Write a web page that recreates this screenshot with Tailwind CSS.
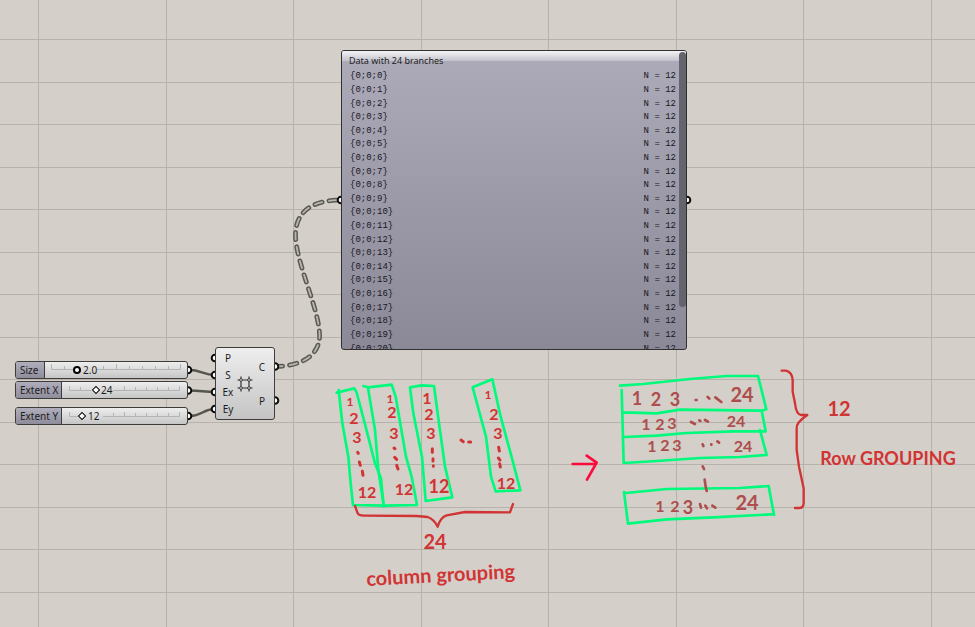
<!DOCTYPE html>
<html lang="en">
<head>
<meta charset="utf-8">
<title>Grid data tree</title>
<script src="https://cdn.jsdelivr.net/npm/@tailwindcss/browser@4"></script>
</head>
<body class="bg-[#d4cfc8]">
<main class="relative min-h-screen w-full overflow-hidden bg-[#d4cfc8] font-['Noto_Sans',sans-serif] text-[#1c1c1c]">

  <!-- canvas grid, wires and ports -->
  <svg class="absolute inset-0 h-full w-full" aria-hidden="true">
    <defs>
      <pattern id="grid" width="255" height="85" patternUnits="userSpaceOnUse">
        <path d="M38.5 0V85M166.5 0V85M0 39.5H255M0 82.5H255" stroke="#b7b3ac" fill="none"/>
      </pattern>
    </defs>
    <rect width="100%" height="100%" fill="url(#grid)"/>
    <g fill="none" stroke="#55544f" stroke-width="2.5">
      <path d="M190 370C200 370 204 375 215 375"/>
      <path d="M190 390.500C200 390.500 205 392 215 392"/>
      <path d="M190 416C202 416 203 409 215 409"/>
    </g>
    <g fill="none" stroke-linecap="round" stroke-dasharray="7.500 7">
      <path d="M275 366.500C303 366 318 355 319.500 338C321 312 295 262 295.500 234C296 212 312 200 341 200" stroke="#5a5954" stroke-width="4.800"/>
      <path d="M275 366.500C303 366 318 355 319.500 338C321 312 295 262 295.500 234C296 212 312 200 341 200" stroke="#b9b6ae" stroke-width="1.800"/>
    </g>
    <g fill="#fff" stroke="#0c0c0c" stroke-width="2">
      <circle cx="188" cy="370" r="3.300"/><circle cx="188" cy="390.500" r="3.300"/><circle cx="188" cy="416" r="3.300"/>
      <circle cx="215" cy="358" r="3.300"/><circle cx="215" cy="375" r="3.300"/><circle cx="215" cy="392" r="3.300"/><circle cx="215" cy="409" r="3.300"/>
      <circle cx="275" cy="366.500" r="3.300"/><circle cx="275" cy="400.500" r="3.300"/>
      <circle cx="341" cy="200" r="3.300"/><circle cx="687" cy="200" r="3.300"/>
    </g>
  </svg>

  <!-- number sliders -->
  <div class="absolute left-[15px] top-[361px] flex h-[18px] w-[173px] overflow-hidden rounded-[3px] border border-[#3c3c3c] bg-linear-to-b from-[#eeeeee] to-[#c6c6c6] text-[10px] leading-4">
    <label for="size" class="w-[29px] shrink-0 border-r border-[#3c3c3c] bg-linear-to-b from-[#b0aebd] to-[#8f8d9c] pl-1">Size</label>
    <div class="relative flex-1">
      <svg class="absolute left-[6px] top-[2px] h-2 w-[131px]" fill="none" stroke="#b4b4b4"><path d="M.5 0V5.500H22M46 5.500H129.500V0M13.500 2V5M52.500 2V5M65.500 0V5M78.500 2V5M91.500 2V5M104.500 2V5M117.500 2V5"/></svg>
      <input id="size" type="range" min="0" max="10" step="0.1" value="2" class="absolute left-[3px] top-0 m-0 h-4 w-[134px] appearance-none bg-transparent [&::-webkit-slider-thumb]:h-[8px] [&::-webkit-slider-thumb]:w-[8px] [&::-webkit-slider-thumb]:appearance-none [&::-webkit-slider-thumb]:rounded-full [&::-webkit-slider-thumb]:border-2 [&::-webkit-slider-thumb]:border-black [&::-webkit-slider-thumb]:bg-white">
      <output for="size" class="absolute left-[38px] top-0">2.0</output>
    </div>
  </div>
  <div class="absolute left-[15px] top-[381px] flex h-[18px] w-[173px] overflow-hidden rounded-[3px] border border-[#3c3c3c] bg-linear-to-b from-[#eeeeee] to-[#c6c6c6] text-[10px] leading-4">
    <label for="extent-x" class="w-[46px] shrink-0 border-r border-[#3c3c3c] bg-linear-to-b from-[#b0aebd] to-[#8f8d9c] pl-1">Extent X</label>
    <div class="relative flex-1">
      <svg class="absolute left-[7px] top-[4px] h-2 w-[112px]" fill="none" stroke="#b4b4b4"><path d="M.5 0V4.500H22M44 4.500H110.500V0M11.500 1V4M55.500 0V4M66.500 1V4M77.500 1V4M88.500 1V4M99.500 1V4"/></svg>
      <input id="extent-x" type="range" min="0" max="100" value="24" class="absolute left-[4px] top-0 m-0 h-4 w-[117px] appearance-none bg-transparent [&::-webkit-slider-thumb]:h-[6px] [&::-webkit-slider-thumb]:w-[6px] [&::-webkit-slider-thumb]:rotate-45 [&::-webkit-slider-thumb]:appearance-none [&::-webkit-slider-thumb]:border [&::-webkit-slider-thumb]:border-black [&::-webkit-slider-thumb]:bg-white">
      <output for="extent-x" class="absolute left-[39px] top-0">24</output>
    </div>
  </div>
  <div class="absolute left-[15px] top-[407px] flex h-[18px] w-[173px] overflow-hidden rounded-[3px] border border-[#3c3c3c] bg-linear-to-b from-[#eeeeee] to-[#c6c6c6] text-[10px] leading-4">
    <label for="extent-y" class="w-[46px] shrink-0 border-r border-[#3c3c3c] bg-linear-to-b from-[#b0aebd] to-[#8f8d9c] pl-1">Extent Y</label>
    <div class="relative flex-1">
      <svg class="absolute left-[7px] top-[4px] h-2 w-[112px]" fill="none" stroke="#b4b4b4"><path d="M.5 0V4.500H10M34 4.500H110.500V0M44.500 1V4M55.500 0V4M66.500 1V4M77.500 1V4M88.500 1V4M99.500 1V4"/></svg>
      <input id="extent-y" type="range" min="0" max="100" value="12" class="absolute left-[4px] top-0 m-0 h-4 w-[117px] appearance-none bg-transparent [&::-webkit-slider-thumb]:h-[6px] [&::-webkit-slider-thumb]:w-[6px] [&::-webkit-slider-thumb]:rotate-45 [&::-webkit-slider-thumb]:appearance-none [&::-webkit-slider-thumb]:border [&::-webkit-slider-thumb]:border-black [&::-webkit-slider-thumb]:bg-white">
      <output for="extent-y" class="absolute left-[26px] top-0">12</output>
    </div>
  </div>

  <!-- grid component -->
  <section aria-label="Square grid" class="absolute left-[215px] top-[347px] flex h-[73px] w-[60px] items-center gap-[2px] rounded-[3px] border border-[#3c3c3c] bg-linear-to-b from-[#eeeeee] to-[#c4c4c4] px-[5px] text-[10px]">
    <ul class="w-[14px] text-center leading-[17px]"><li>P</li><li>S</li><li>Ex</li><li>Ey</li></ul>
    <svg class="h-4 w-4 shrink-0" viewBox="0 0 16 16" fill="none" stroke="#333" aria-hidden="true">
      <path d="M4.500 4.500H11.500V11.500H4.500Z" fill="#ddd" stroke="none"/>
      <path d="M4 .5V15.500M12 .5V15.500M.5 4H15.500M.5 12H15.500" stroke-width="1.200"/>
      <g fill="#ddd" stroke-width=".9"><circle cx="4" cy="4" r="1.400"/><circle cx="12" cy="4" r="1.400"/><circle cx="4" cy="12" r="1.400"/><circle cx="12" cy="12" r="1.400"/></g>
    </svg>
    <ul class="ml-auto w-[14px] text-center leading-[34px]"><li>C</li><li>P</li></ul>
  </section>

  <!-- data panel -->
  <section class="absolute left-[341px] top-[50px] h-[300px] w-[346px] overflow-hidden rounded-[3px] border border-[#303030] bg-linear-to-b from-[#adabb9] to-[#8b8998]">
    <div class="h-[10px] bg-linear-to-b from-[#f4f4f7] to-[#c3c2cc]"></div>
    <h1 class="-mt-[9px] pl-[7px] text-[9px] leading-[18px] text-[#222]">Data with 24 branches</h1>
    <table class="h-[286px] w-[334px] border-collapse font-['Liberation_Mono',monospace] text-[9px] leading-[13px] text-[#17171d]">
      <tbody id="branches"></tbody>
    </table>
    <div class="absolute right-0 top-[1px] h-[255px] w-[7px] rounded-full bg-[#64646c]"></div>
  </section>

  <!-- pen annotations -->
  <svg class="absolute inset-0 h-full w-full font-['Lato',sans-serif] font-bold" fill="none" stroke-linecap="round" stroke-linejoin="round">
    <g stroke="#00fa7c" stroke-width="8">
      <g transform="translate(325 370) scale(.33333)">
        <path d="M35 68L88 55L95 68L124 178L150 280L168 325L176 410M41 60L52 160L70 260L76 330L84 405L176 407"/>
        <path d="M115 48L130 52L200 44L212 80L243 260L260 320L276 405L180 407M129 54L150 180L160 300L176 405"/>
        <path d="M255 52L290 46L327 48L338 130L360 290L382 382L302 393L291 260L265 130Z"/>
        <path d="M443 52L502 28L527 140L565 280L586 361L512 364L498 320L483 200Z"/>
      </g>
      <g transform="translate(560 365) scale(.33333)">
        <path d="M180 62L250 57L390 42L500 33L594 33L619 133L605 137L360 134L290 145L190 142M185 75L191 294L290 288L420 279L540 276L620 270L600 195M605 137L617 199L520 199L380 204L290 212L192 216"/>
        <path d="M192 381L204 476L320 463L460 457L634 448M198 384L320 372L540 369L626 363L642 450"/>
      </g>
    </g>
    <g stroke="#d13434" stroke-width="7">
      <g transform="translate(325 370) scale(.33333)">
        <path d="M90 408L98 430Q102 438 120 437L275 438L308 441Q326 447 338 470Q346 442 365 436L420 426L555 427L564 402"/>
        <path d="M98 247L100 250M103 276L106 286M112 304L114 316M207 234L210 236M209 262L215 268M215 286L219 297M322 236L322 247M324 266L324 273M325 287L325 289M408 210L415 215M431 216L437 216M521 232L523 243M520 264L525 270M524 281L526 291" stroke-width="9"/>
      </g>
      <path d="M35 32H48Q66 36 68 60V95L75 130Q79 165 94 165H112Q78 188 80 205V270L87 320L101 385V430Q100 444 88 444H75" transform="translate(770 360) scale(.33333)"/>
    </g>
    <g transform="translate(560 365) scale(.33333)">
      <path d="M38 297H108M80 272L110 293L81 344" stroke="#fb0a3c" stroke-width="8"/>
      <path d="M407 105H410M443 96L448 101M466 97L484 111M393 171L405 177M418 166L421 168M435 165L444 170M428 238L430 243M454 238V239M472 229L477 233M428 304L432 312M434 344L437 365L440 378M420 417L423 428M436 422L441 430M457 422L466 428" stroke="#ae4d4d" stroke-width="8"/>
    </g>
    <g fill="#d13434" text-anchor="middle" font-size="16">
      <text x="350" y="406" font-size="12">1</text><text x="354" y="424">2</text><text x="357" y="443">3</text><text x="367" y="498">12</text>
      <text x="390" y="403" font-size="12">1</text><text x="392" y="418">2</text><text x="394" y="439">3</text><text x="404" y="495">12</text>
      <text x="427" y="404">1</text><text x="429" y="420">2</text><text x="431" y="439">3</text><text x="439" y="493" font-size="18">12</text>
      <text x="488" y="399" font-size="12">1</text><text x="494" y="420">2</text><text x="498" y="439">3</text><text x="506" y="489">12</text>
      <text x="435" y="549" font-size="20">24</text>
      <text x="441" y="582" font-size="20" transform="rotate(-3 441 582)">column grouping</text>
      <text x="839" y="416" font-size="20">12</text>
      <text x="888" y="465" font-size="18">Row GROUPING</text>
    </g>
    <g fill="#ae4d4d" text-anchor="middle" font-size="16">
      <text x="637" y="405" font-size="18">1</text><text x="656" y="406" font-size="18">2</text><text x="675" y="406" font-size="18">3</text><text x="742" y="402" font-size="20">24</text>
      <text x="646" y="430">1</text><text x="660" y="430">2</text><text x="672" y="429">3</text><text x="736" y="427">24</text>
      <text x="652" y="452">1</text><text x="665" y="451">2</text><text x="677" y="451">3</text><text x="743" y="452">24</text>
      <text x="660" y="512">1</text><text x="675" y="512">2</text><text x="688" y="514" font-size="18">3</text><text x="747" y="510" font-size="20">24</text>
    </g>
  </svg>
</main>
<script>
  const body = document.getElementById('branches');
  for (let i = 0; i < 21; i++) {
    const row = body.insertRow();
    const path = row.insertCell();
    path.className = 'p-0 pl-[8px] text-left';
    path.textContent = `{0;0;${i}}`;
    const count = row.insertCell();
    count.className = 'p-0 text-right';
    count.textContent = 'N = 12';
  }
</script>
</body>
</html>
